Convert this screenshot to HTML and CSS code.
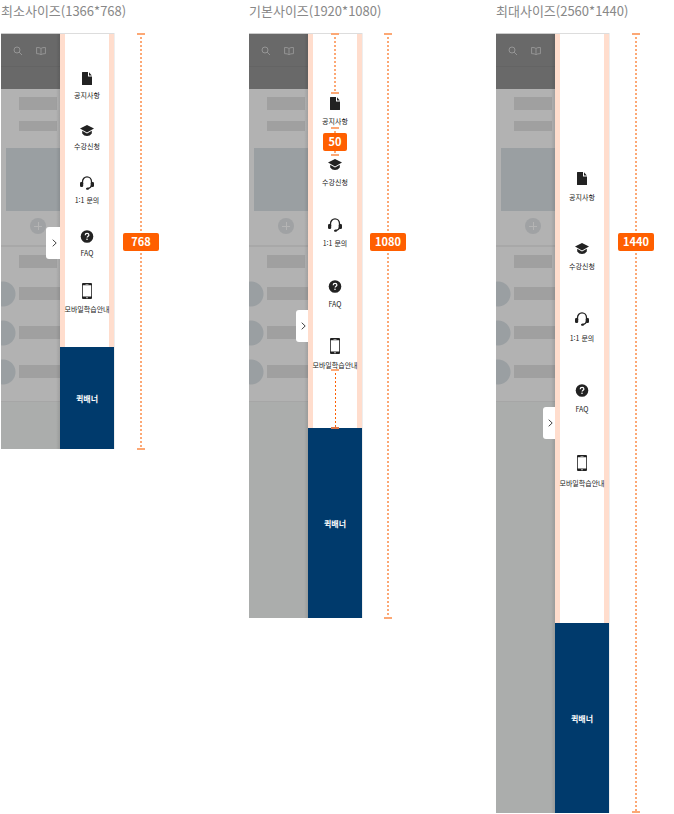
FILE: index.html
```html
<!DOCTYPE html>
<html lang="ko">
<head>
<meta charset="utf-8">
<title>퀵메뉴 사이즈</title>
<link rel="stylesheet" href="styles.css">
</head>
<body>
<svg class="sprite" aria-hidden="true">
  <symbol id="search" viewBox="0 0 10 10"><circle cx="4" cy="4" r="3" fill="none" stroke="currentColor" stroke-width=".8"/><path d="M6.200 6.200 9 9" stroke="currentColor" stroke-width=".8"/></symbol>
  <symbol id="book" viewBox="0 0 10 10"><path d="M5 2.600C4 1.600 2.500 1.500.6 1.500v6.200C2.500 7.700 4 7.900 5 8.800 6 7.900 7.500 7.700 9.400 7.700V1.500C7.500 1.500 6 1.600 5 2.600Zm0 0v6" fill="none" stroke="currentColor" stroke-width=".8"/></symbol>
  <symbol id="doc" viewBox="0 0 10 13"><path d="M1 0h5v4.500h4V12.500a.5.5 0 0 1-.5.5h-9a.5.5 0 0 1-.5-.5V.5a.5.5 0 0 1 .5-.5Z" fill="currentColor"/><path d="M7 .2 9.800 3.500H7Z" fill="currentColor"/></symbol>
  <symbol id="cap" viewBox="0 0 14 11"><path d="M7 0 14 3.500 7 7.500 0 3.500Z" fill="currentColor"/><path d="M2.200 5.800 7 8.500l4.800-2.700v2.700C10.500 10.200 9 11 7 11s-3.500-.8-4.800-2.500Z" fill="currentColor"/></symbol>
  <symbol id="headset" viewBox="0 0 14 14"><path d="M2.500 7.500V5.800a4.500 5 0 0 1 9 0v2.700c0 2.200-1.500 3.800-4.300 4" fill="none" stroke="currentColor" stroke-width="1.300"/><rect x="0" y="6" width="3.200" height="5" rx="1.300" fill="currentColor"/><rect x="10.800" y="6" width="3.200" height="5" rx="1.300" fill="currentColor"/><rect x="6" y="11.700" width="3" height="2" rx="1" fill="currentColor"/></symbol>
  <symbol id="faq" viewBox="0 0 13 13"><circle cx="6.500" cy="6.500" r="6.300" fill="currentColor"/><path d="M4.700 5.200c0-1.100.7-1.800 1.900-1.800 1.100 0 1.800.6 1.800 1.500 0 1.300-1.800 1.300-1.800 2.700" fill="none" stroke="#fff" stroke-width="1.200"/><circle cx="6.500" cy="9.300" r=".8" fill="#fff"/></symbol>
  <symbol id="phone" viewBox="0 0 10 16"><path d="M1 0h8a1 1 0 0 1 1 1v14a1 1 0 0 1-1 1H1a1 1 0 0 1-1-1V1a1 1 0 0 1 1-1ZM.8 2.300v11.200h8.400V2.300ZM3.500 1v.5h3V1ZM4.300 14.300v.9h1.400v-.9Z" fill="currentColor" fill-rule="evenodd"/></symbol>
</svg>

<main class="specs">
  <section class="spec spec--min">
    <h2 class="spec__title">최소사이즈(1366*768)</h2>
    <div class="spec__body">
      <div class="page">
        <div class="page__header"><svg><use href="#search"/></svg><svg><use href="#book"/></svg></div>
        <div class="page__content">
          <i class="bar"></i><i class="bar bar--thin"></i><i class="photo"></i><i class="plus"></i>
          <div class="list"><i class="bar"></i><i class="row"></i><i class="row"></i><i class="row"></i></div>
        </div>
        <button class="handle" aria-label="퀵메뉴 닫기"><svg viewBox="0 0 5 8"><path d="M.7.7 4.200 4 .7 7.300"/></svg></button>
      </div>
      <aside class="panel">
        <nav class="menu">
          <a class="menu__item" href="#"><svg class="icon icon--doc"><use href="#doc"/></svg>공지사항</a>
          <a class="menu__item" href="#"><svg class="icon icon--cap"><use href="#cap"/></svg>수강신청</a>
          <a class="menu__item" href="#"><svg class="icon icon--headset"><use href="#headset"/></svg>1:1 문의</a>
          <a class="menu__item" href="#"><svg class="icon icon--faq"><use href="#faq"/></svg>FAQ</a>
          <a class="menu__item" href="#"><svg class="icon icon--phone"><use href="#phone"/></svg>모바일학습안내</a>
        </nav>
        <a class="banner" href="#">퀵배너</a>
      </aside>
      <div class="ruler"><span class="tag">768</span></div>
    </div>
  </section>

  <section class="spec spec--base">
    <h2 class="spec__title">기본사이즈(1920*1080)</h2>
    <div class="spec__body">
      <div class="page">
        <div class="page__header"><svg><use href="#search"/></svg><svg><use href="#book"/></svg></div>
        <div class="page__content">
          <i class="bar"></i><i class="bar bar--thin"></i><i class="photo"></i><i class="plus"></i>
          <div class="list"><i class="bar"></i><i class="row"></i><i class="row"></i><i class="row"></i></div>
        </div>
        <button class="handle" aria-label="퀵메뉴 닫기"><svg viewBox="0 0 5 8"><path d="M.7.7 4.200 4 .7 7.300"/></svg></button>
      </div>
      <aside class="panel">
        <nav class="menu">
          <a class="menu__item" href="#"><svg class="icon icon--doc"><use href="#doc"/></svg>공지사항</a>
          <a class="menu__item" href="#"><svg class="icon icon--cap"><use href="#cap"/></svg>수강신청</a>
          <a class="menu__item" href="#"><svg class="icon icon--headset"><use href="#headset"/></svg>1:1 문의</a>
          <a class="menu__item" href="#"><svg class="icon icon--faq"><use href="#faq"/></svg>FAQ</a>
          <a class="menu__item" href="#"><svg class="icon icon--phone"><use href="#phone"/></svg>모바일학습안내</a>
          <div class="measure measure--top"></div>
          <div class="measure measure--gap"><span class="tag tag--small">50</span></div>
          <div class="measure measure--bottom"></div>
        </nav>
        <a class="banner" href="#">퀵배너</a>
      </aside>
      <div class="ruler"><span class="tag">1080</span></div>
    </div>
  </section>

  <section class="spec spec--max">
    <h2 class="spec__title">최대사이즈(2560*1440)</h2>
    <div class="spec__body">
      <div class="page">
        <div class="page__header"><svg><use href="#search"/></svg><svg><use href="#book"/></svg></div>
        <div class="page__content">
          <i class="bar"></i><i class="bar bar--thin"></i><i class="photo"></i><i class="plus"></i>
          <div class="list"><i class="bar"></i><i class="row"></i><i class="row"></i><i class="row"></i></div>
        </div>
        <button class="handle" aria-label="퀵메뉴 닫기"><svg viewBox="0 0 5 8"><path d="M.7.7 4.200 4 .7 7.300"/></svg></button>
      </div>
      <aside class="panel">
        <nav class="menu">
          <a class="menu__item" href="#"><svg class="icon icon--doc"><use href="#doc"/></svg>공지사항</a>
          <a class="menu__item" href="#"><svg class="icon icon--cap"><use href="#cap"/></svg>수강신청</a>
          <a class="menu__item" href="#"><svg class="icon icon--headset"><use href="#headset"/></svg>1:1 문의</a>
          <a class="menu__item" href="#"><svg class="icon icon--faq"><use href="#faq"/></svg>FAQ</a>
          <a class="menu__item" href="#"><svg class="icon icon--phone"><use href="#phone"/></svg>모바일학습안내</a>
        </nav>
        <a class="banner" href="#">퀵배너</a>
      </aside>
      <div class="ruler"><span class="tag">1440</span></div>
    </div>
  </section>
</main>
</body>
</html>
```
FILE: styles.css
```css
* { box-sizing: border-box; }

body {
  margin: 0;
  background: #fff;
  color: #222;
  font-family: "Noto Sans CJK KR", sans-serif;
}

a { color: inherit; text-decoration: none; }
i { display: block; }
.sprite { position: absolute; width: 0; height: 0; }

.specs {
  display: grid;
  grid-template-columns: 248fr 247fr 178fr;
  align-items: start;
  padding-left: 1px;
}

.spec__title {
  margin: 0 0 11px;
  color: #888;
  font-size: 13px;
  font-weight: 400;
  line-height: 22px;
  white-space: nowrap;
}

.spec__body { display: flex; min-height: var(--height); }

.spec--min { --height: 416px; --banner: 102px; --start: 38px; --gap: 24px; --label-gap: 4px; --handle-top: 193px; --handle: 14px; }
.spec--base { --height: 585px; --banner: 190px; --start: 63px; --gap: 31px; --label-gap: 5px; --handle-top: 276px; --handle: 12px; }
.spec--max { --height: 780px; --banner: 190px; --start: 138px; --gap: 40px; --label-gap: 6px; --handle-top: 373px; --handle: 12px; }

/* dimmed page behind the panel */
.page {
  position: relative;
  width: 59px;
  overflow: hidden;
  background: #abadac;
  border-top: 1px solid #ccc;
}

.page::after {
  content: "";
  position: absolute;
  inset: 0 0 0 auto;
  width: 4px;
  background: linear-gradient(to right, transparent, rgba(0, 0, 0, .1));
}

.page__header {
  display: flex;
  gap: 13px;
  height: 55px;
  padding: 12px 0 0 12px;
  background: linear-gradient(#696969 32px, #646464 32px, #646464 33px, #696969 33px);
  color: #a0a0a0;
}

.page__header svg { flex: none; width: 10px; height: 10px; }

.page__content {
  padding-top: 8px;
  background: #b2b2b2;
  border-bottom: 1px solid #a6a6a6;
}

.bar { width: 38px; height: 13px; margin-left: 18px; background: #a0a0a0; }
.bar--thin { height: 10px; margin-top: 11px; }
.photo { height: 63px; margin: 17px 0 0 5px; background: #9a9fa2; }

.plus {
  width: 16px;
  height: 16px;
  margin: 7px 0 0 29px;
  border-radius: 50%;
  background:
    linear-gradient(#b4b4b4, #b4b4b4) center / 8px 1px no-repeat,
    linear-gradient(#b4b4b4, #b4b4b4) center / 1px 8px no-repeat,
    #a0a2a4;
}

.list {
  margin-top: 11px;
  padding: 8px 0 16px;
  border-top: 2px solid #a8a8a8;
}

.row {
  height: 26px;
  margin-top: 13px;
  background:
    radial-gradient(circle at 2px 13px, #9a9fa2 12px, transparent 13px),
    linear-gradient(#a0a0a0, #a0a0a0) 18px 6px / 100% 13px no-repeat;
}

.handle {
  position: absolute;
  z-index: 1;
  top: var(--handle-top);
  right: 0;
  display: grid;
  place-items: center;
  width: var(--handle);
  height: 32px;
  padding: 0 0 0 3px;
  border: 0;
  border-radius: 3px 0 0 3px;
  background: #fff;
}

.handle svg { width: 5px; height: 8px; fill: none; stroke: #444; stroke-width: 1; }

.panel {
  display: flex;
  flex-direction: column;
  width: 54px;
  border-top: 1px solid #ddd;
  box-shadow: 1px 0 0 #eee;
}

.menu {
  position: relative;
  flex: 1;
  display: flex;
  flex-direction: column;
  align-items: center;
  gap: var(--gap);
  padding-top: var(--start);
  border: solid #ffddcd;
  border-width: 0 5px;
}

.menu__item {
  display: flex;
  flex-direction: column;
  align-items: center;
  gap: var(--label-gap);
  font-size: 7px;
  line-height: 12px;
  white-space: nowrap;
}

.icon { width: 14px; height: 13px; }
.icon--cap { height: 11px; }
.icon--headset { height: 14px; }
.icon--phone { height: 16px; }
.spec--base .icon--cap { height: 13px; }
.spec--base .icon--headset { margin-top: -1px; }
.spec--base .icon--phone { margin-top: -3px; }

.banner {
  display: grid;
  place-items: center;
  height: var(--banner);
  background: #003a6c;
  color: #fff;
  font-size: 8px;
  font-weight: 700;
}

/* dimension lines */
.ruler, .measure {
  display: flex;
  justify-content: center;
  background:
    linear-gradient(#fca875, #fca875) top / 8px 2px no-repeat,
    linear-gradient(#fca875, #fca875) bottom / 8px 2px no-repeat,
    repeating-linear-gradient(#fca875 0 2px, #fff 2px 4px) center / 2px 100% no-repeat;
}

.ruler { width: 36px; margin: 0 0 -1px 9px; padding-top: 200px; }
.spec--base .ruler { margin-left: 8px; }
.spec--max .ruler { margin-bottom: 0; }

.tag {
  width: 36px;
  height: 18px;
  border-radius: 2px;
  background: #ff5f00;
  color: #fff;
  font-size: 11px;
  font-weight: 700;
  line-height: 17px;
  text-align: center;
}

.tag--small { width: 24px; }

.measure { position: absolute; left: 10px; width: 24px; }
.measure--top { top: -1px; height: 61px; }
.measure--gap { top: 93px; height: 29px; padding-top: 6px; }
.measure--bottom {
  bottom: -1px;
  height: 60px;
  background:
    linear-gradient(#fca875, #fca875) top / 8px 2px no-repeat,
    linear-gradient(#d9764a, #d9764a) bottom / 8px 2px no-repeat,
    repeating-linear-gradient(#ff5f00 0 2px, #fff 2px 4px) 12px 0 / 1px 100% no-repeat;
}
```
